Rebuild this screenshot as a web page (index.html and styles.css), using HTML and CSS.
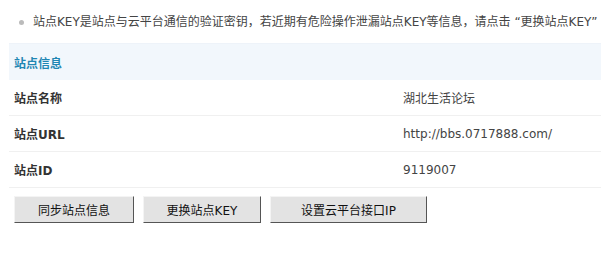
FILE: index.html
```html
<!DOCTYPE html>
<html lang="zh-CN">
<head>
<meta charset="utf-8">
<title>站点信息</title>
<link rel="stylesheet" href="styles.css">
</head>
<body>
<div class="page">
  <ul class="tips">
    <li>站点KEY是站点与云平台通信的验证密钥，若近期有危险操作泄漏站点KEY等信息，请点击 “更换站点KEY”</li>
  </ul>
  <table class="info">
    <tr class="head"><th colspan="2">站点信息</th></tr>
    <tr><td class="label">站点名称</td><td class="value">湖北生活论坛</td></tr>
    <tr><td class="label">站点URL</td><td class="value">http://bbs.0717888.com/</td></tr>
    <tr><td class="label">站点ID</td><td class="value">9119007</td></tr>
  </table>
  <div class="actions">
    <button class="btn btn-sync">同步站点信息</button>
    <button class="btn btn-key">更换站点KEY</button>
    <button class="btn btn-ip">设置云平台接口IP</button>
  </div>
</div>
</body>
</html>
```
FILE: styles.css
```css
html, body {
  margin: 0;
  padding: 0;
  background: #fff;
  overflow: hidden;
}
body {
  font-family: "DejaVu Sans", "Noto Sans CJK SC", sans-serif;
  font-size: 12px;
  color: #444;
}
.page {
  width: 592px;
  padding-left: 9px;
}
.tips {
  margin: 0;
  padding: 12px 0 0 24px;
  list-style: none;
  height: 43px;
  box-sizing: border-box;
}
.tips li {
  position: relative;
  white-space: nowrap;
  line-height: 20px;
  color: #444;
}
.tips li::before {
  content: "";
  position: absolute;
  left: -14px;
  top: 8px;
  width: 5px;
  height: 5px;
  border-radius: 50%;
  background: #bbb;
}
.info {
  border-collapse: collapse;
  width: 100%;
}
.info th, .info td {
  text-align: left;
  padding: 0 5px;
}
.head th {
  height: 36px;
  background: #f2f7fc;
  color: #1f86b3;
  font-weight: bold;
  border-top: 1px solid #eef3f9;
}
.info td {
  height: 35px;
  border-bottom: 1px solid #f0f0f0;
}
.label {
  width: 379px;
  font-weight: bold;
  color: #333;
}
.value {
  color: #444;
}
.actions {
  display: flex;
  gap: 9px;
  padding: 8px 0 0 5px;
}
.btn {
  height: 27px;
  padding: 0;
  font-family: "DejaVu Sans", "Noto Sans CJK SC", sans-serif;
  font-size: 12px;
  color: #111;
  background: #e3e3e3;
  border: 1px solid;
  border-color: #f4f4f4 #555 #555 #f4f4f4;
}
.btn-sync { width: 120px; }
.btn-key { width: 118px; }
.btn-ip { width: 157px; }
```
